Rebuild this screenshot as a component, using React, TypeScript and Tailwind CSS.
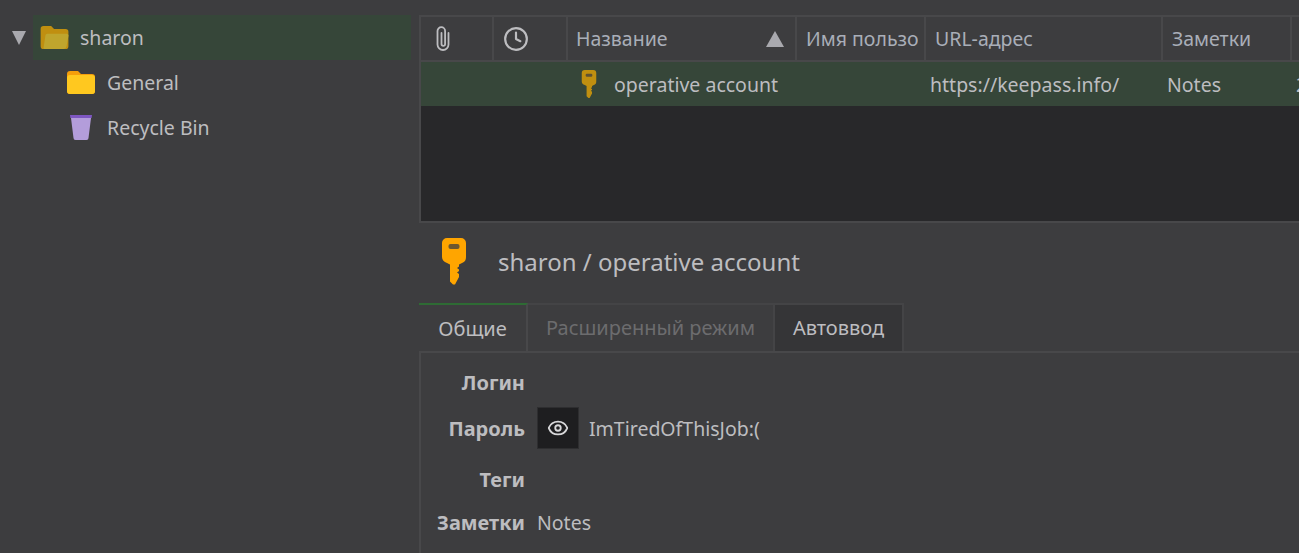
import { ReactNode } from 'react';
import { Clock, Eye } from 'lucide-react';

// column widths of the entry table, left to right
const COLUMNS = 'grid-cols-[73px_74px_229px_129px_237px_129px_60px]';

const KeyIcon = ({ className, color }: { className: string; color: string }) => (
  <svg viewBox="0 0 26 48" className={className} aria-hidden="true">
    <path
      fill={color}
      d="M6 0h14a5 5 0 0 1 5 5v14c0 3-1 5-4 6l-3 1.500v2l-2 1.500 2 1.500v1.500l-2 1.500 2 1.500v3l-4 7.500h-2l-3-3V26.500l-3-1.500c-3-1-5-3-5-6V5a5 5 0 0 1 5-5z"
    />
    <rect x="7.500" y="6" width="11" height="5" rx="2" fill="#3d3d3f" opacity="0.75" />
  </svg>
);

const HeaderCell = ({ children, className = '' }: { children?: ReactNode; className?: string }) => (
  <div className={`flex h-full items-center overflow-hidden whitespace-nowrap border-r-2 border-[#48484a] ${className}`}>
    {children}
  </div>
);

const TreeRow = ({ icon, label, selected }: { icon: ReactNode; label: string; selected?: boolean }) => (
  <div className={`flex h-[45px] items-center ${selected ? 'bg-[#364639]' : ''}`}>
    {icon}
    <span>{label}</span>
  </div>
);

const Field = ({ label, height, children }: { label: string; height: string; children?: ReactNode }) => (
  <div className={`flex items-center ${height}`}>
    <div className="w-[104px] text-right text-[20px] font-bold">{label}</div>
    <div className="ml-[12px] flex items-center">{children}</div>
  </div>
);

export default function App() {
  return (
    <div
      className="flex h-[553px] w-[1299px] overflow-hidden bg-[#3d3d3f] text-[19.5px] leading-[27px] text-[#bdbdc0]"
      style={{ fontFamily: '"Noto Sans", sans-serif' }}
    >
      {/* group tree */}
      <aside className="w-[419px] shrink-0 pt-[15px]">
        <div className="relative ml-[33px] mr-[8px]">
          <svg viewBox="0 0 14 14" className="absolute -left-[21px] top-[16px] h-[14px] w-[14px]" aria-hidden="true">
            <path d="M0 0h14L7 14z" fill="#a9a9ae" />
          </svg>
          <TreeRow
            selected
            label="sharon"
            icon={
              <svg viewBox="0 0 30 24" className="ml-[7px] mr-[10px] h-[23px] w-[30px]" aria-hidden="true">
                <path d="M3 0h8l3 3h12a3 3 0 0 1 3 3v15a3 3 0 0 1-3 3H3a3 3 0 0 1-3-3V3a3 3 0 0 1 3-3z" fill="#c08f10" />
                <path d="M7 8h20a2 2 0 0 1 2 2.500l-2 11a3 3 0 0 1-3 2.500H4a2 2 0 0 1-1-1l2-13a2 2 0 0 1 2-2z" fill="#bfa52d" />
              </svg>
            }
          />
          <TreeRow
            label="General"
            icon={
              <svg viewBox="0 0 28 23" className="ml-[34px] mr-[12px] h-[23px] w-[28px]" aria-hidden="true">
                <path d="M3 0h8l3 3h11a3 3 0 0 1 3 3v14a3 3 0 0 1-3 3H3a3 3 0 0 1-3-3V3a3 3 0 0 1 3-3z" fill="#f59e0b" />
                <path d="M3 4h22a3 3 0 0 1 3 3v13a3 3 0 0 1-3 3H3a3 3 0 0 1-3-3V7a3 3 0 0 1 3-3z" fill="#ffc81f" />
              </svg>
            }
          />
          <TreeRow
            label="Recycle Bin"
            icon={
              <svg viewBox="0 0 22 25" className="ml-[37px] mr-[15px] h-[25px] w-[22px]" aria-hidden="true">
                <path d="M1 3h20l-2.500 20a2 2 0 0 1-2 2h-11a2 2 0 0 1-2-2z" fill="#b39ddb" />
                <path d="M0 0h22l-.4 3H.4z" fill="#7e57c2" />
              </svg>
            }
          />
        </div>
      </aside>

      <main className="min-w-0 flex-1 pt-[15px]">
        {/* entry table */}
        <div className="h-[208px] border-l-2 border-t-2 border-b-2 border-[#48484a] bg-[#28282a]">
          <div className={`grid h-[43px] bg-[#3d3d3f] text-[#a9aeb8] ${COLUMNS}`}>
            <HeaderCell className="pl-[15px]">
              <svg viewBox="0 0 14 25" className="h-[25px] w-[14px]" fill="none" stroke="#bdbdc0" strokeWidth="1.800" strokeLinecap="round" aria-hidden="true">
                <path d="M12.500 7v11.500a5.500 5.500 0 0 1-11 0V5a3.800 3.800 0 0 1 7.600 0v13a1.800 1.800 0 0 1-3.600 0V7" />
              </svg>
            </HeaderCell>
            <HeaderCell className="pl-[9px]">
              <Clock className="h-[26px] w-[26px] text-[#bdbdc0]" strokeWidth={2} />
            </HeaderCell>
            <HeaderCell className="justify-between pl-[8px] pr-[11px]">
              <span>Название</span>
              <svg viewBox="0 0 18 16" className="h-[16px] w-[18px]" aria-hidden="true">
                <path d="M9 0l9 16H0z" fill="#a9a9ae" />
              </svg>
            </HeaderCell>
            <HeaderCell className="pl-[9px] pr-[6px]">
              <span className="block w-full overflow-hidden">Имя пользователя</span>
            </HeaderCell>
            <HeaderCell className="pl-[9px]">URL-адрес</HeaderCell>
            <HeaderCell className="pl-[9px]">Заметки</HeaderCell>
            <HeaderCell className="border-r-0" />
          </div>
          <div className={`grid h-[46px] items-center border-t-2 border-[#48484a] bg-[#364639] ${COLUMNS}`}>
            <div />
            <div />
            <div className="flex items-center pl-[13px]">
              <KeyIcon className="h-[29px] w-[16px]" color="#c08f10" />
              <span className="ml-[17px] whitespace-nowrap">operative account</span>
            </div>
            <div />
            <div className="whitespace-nowrap pl-[4px]">https://keepass.info/</div>
            <div className="pl-[4px]">Notes</div>
            <div className="pl-[4px]">2</div>
          </div>
        </div>

        {/* entry title */}
        <div className="flex h-[80px] items-center pb-[2px] pl-[22px] text-[24px]">
          <KeyIcon className="h-[48px] w-[26px]" color="#ffa500" />
          <span className="ml-[31px] whitespace-nowrap pb-[2px]">sharon / operative account</span>
        </div>

        {/* tabs */}
        <div className="flex h-[50px] border-b-2 border-[#48484a] text-[20px]">
          <div className="flex h-[50px] w-[109px] items-center justify-center border-r-2 border-t-2 border-r-[#48484a] border-t-[#2e6b34] pb-[2px]">
            Общие
          </div>
          <div className="flex w-[247px] items-center justify-center border-r-2 border-t-2 border-[#444446] pb-[2px] text-[#6c6c6e]">
            Расширенный режим
          </div>
          <div className="flex w-[129px] items-center justify-center border-r-2 border-t-2 border-[#444446] bg-[#353537] pb-[2px]">
            Автоввод
          </div>
        </div>

        <div className="h-[201px] border-l-2 border-[#48484a]">
          <div className="pt-[11px]">
            <Field label="Логин" height="h-[36px]" />
            <Field label="Пароль" height="h-[56px]">
              <button className="flex h-[42px] w-[42px] items-center justify-center border border-[#2e2e30] bg-[#1e1e20]">
                <Eye className="h-[22px] w-[22px] text-[#d8d8da]" strokeWidth={2} />
              </button>
              <span className="ml-[10px]">ImTiredOfThisJob:(</span>
            </Field>
            <Field label="Теги" height="h-[46px]" />
            <Field label="Заметки" height="h-[40px]">
              <span>Notes</span>
            </Field>
          </div>
        </div>
      </main>
    </div>
  );
}
